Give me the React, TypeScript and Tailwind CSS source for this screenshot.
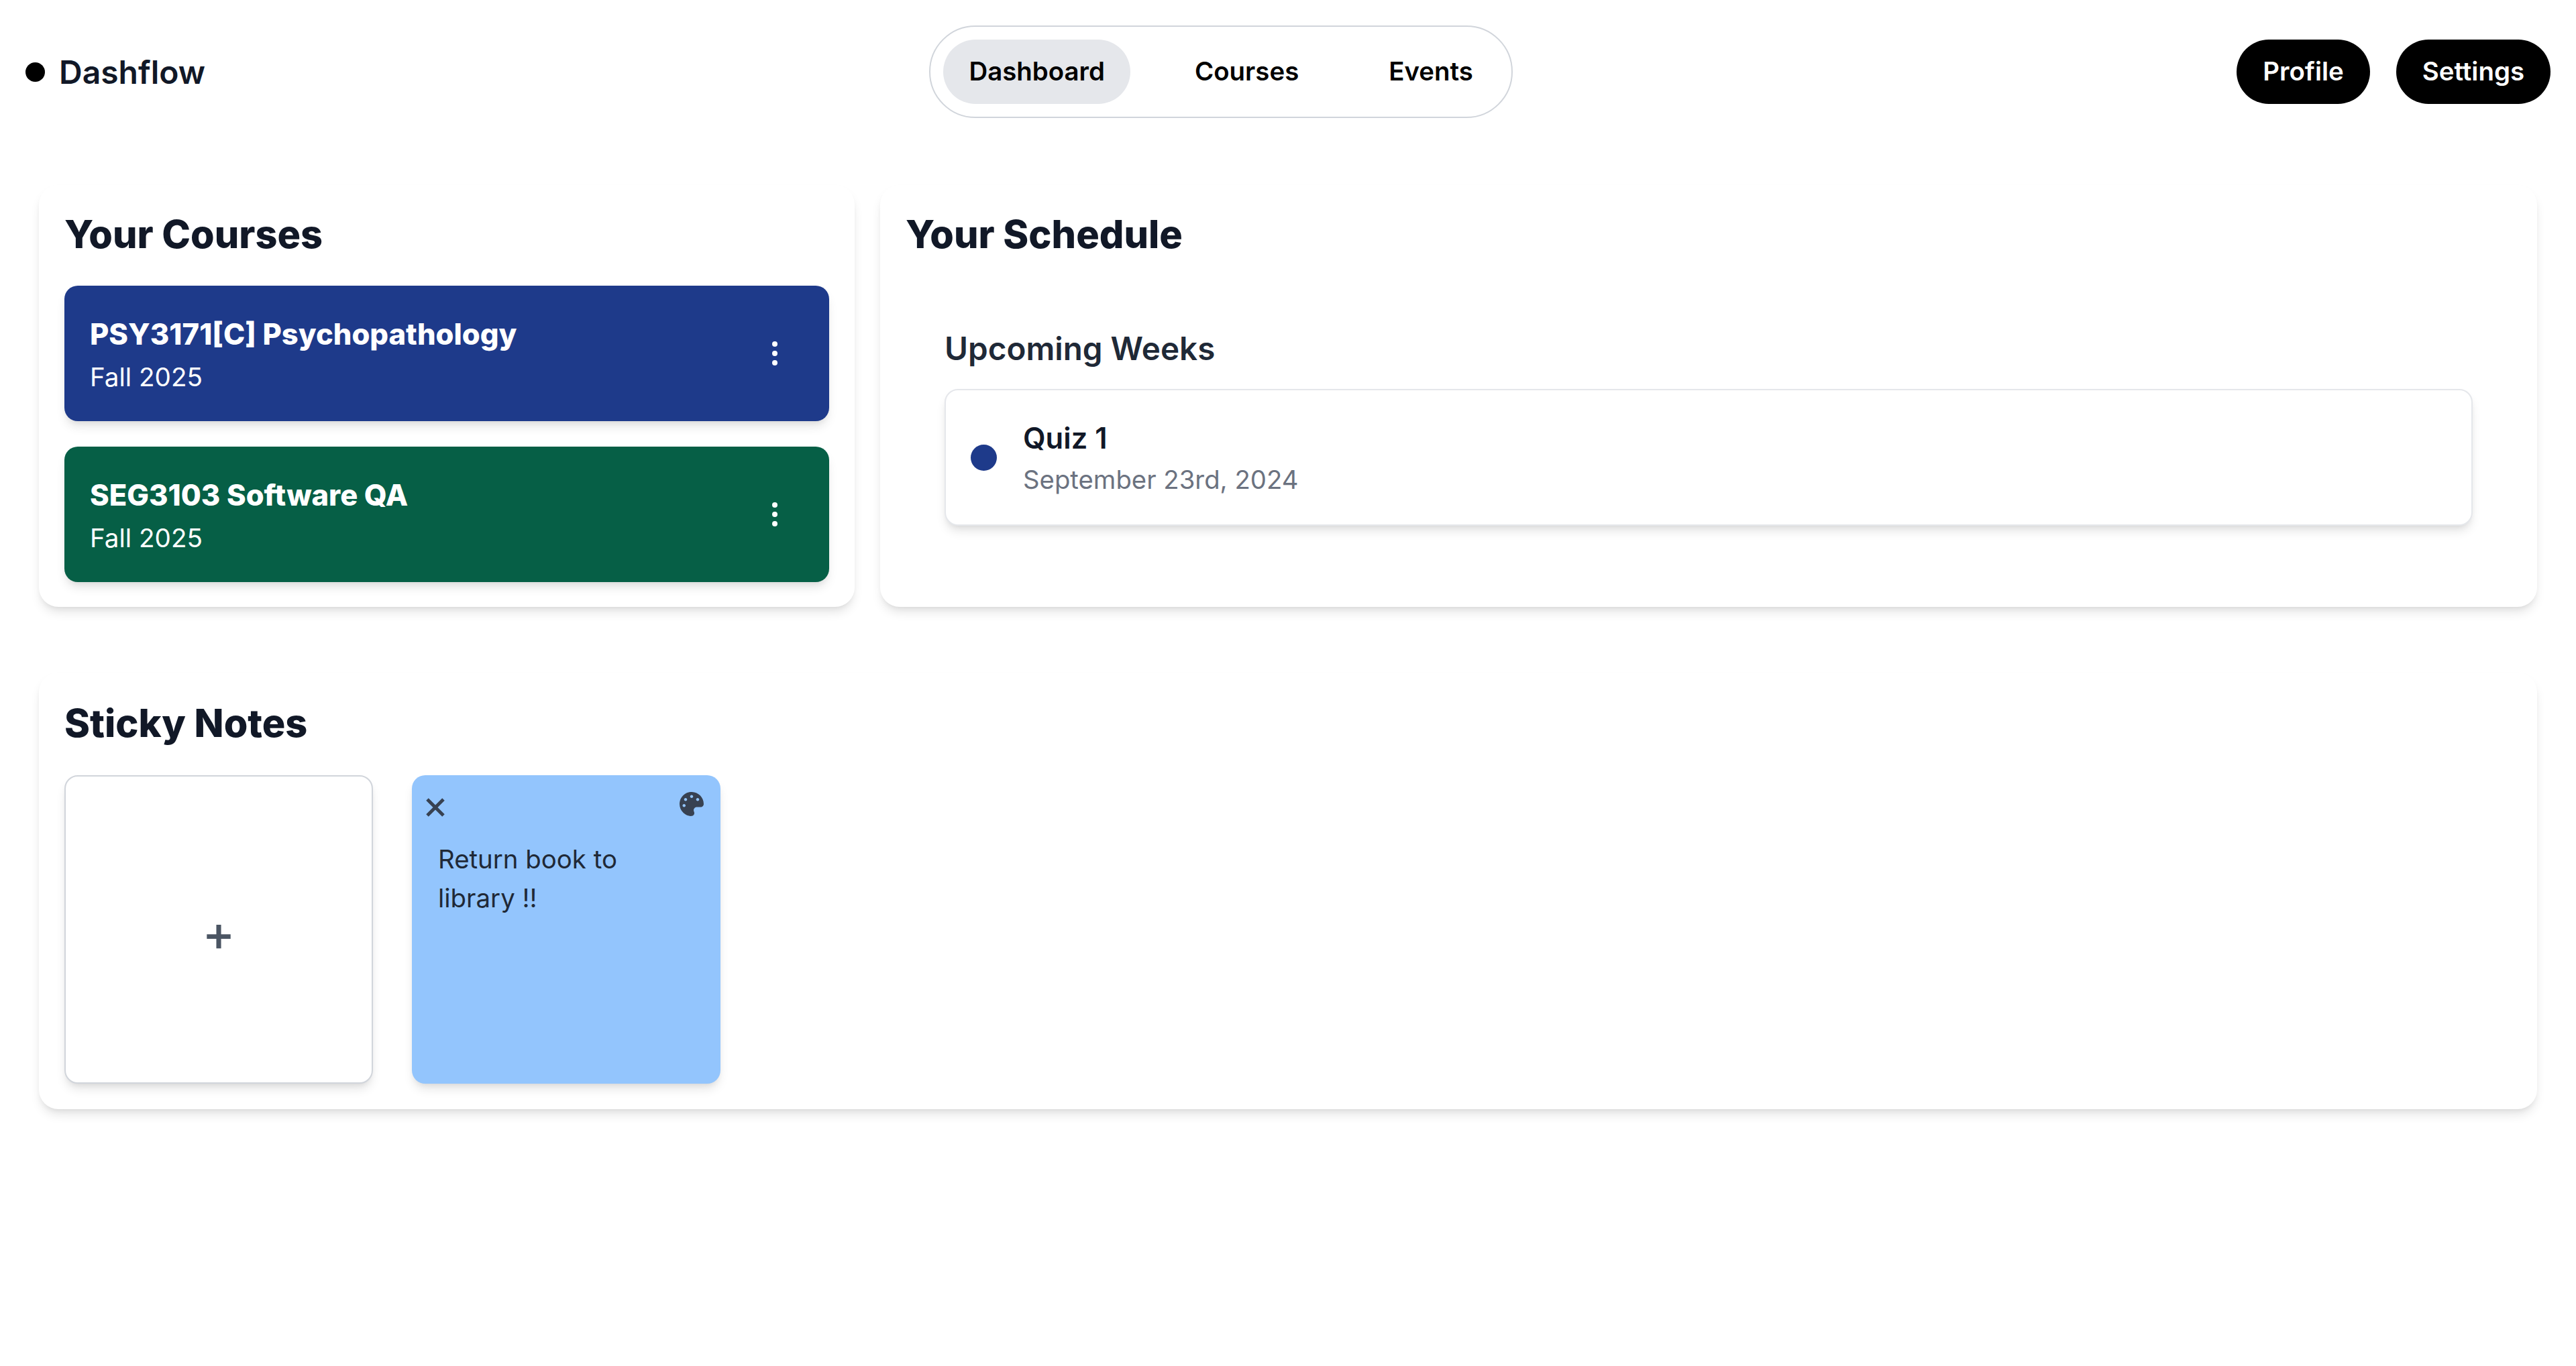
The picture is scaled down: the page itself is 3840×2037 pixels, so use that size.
import { FaPalette } from 'react-icons/fa';

const cardShadow = 'shadow-[0_10px_15px_-2px_rgba(0,0,0,0.1),0_5px_10px_-5px_rgba(0,0,0,0.1)]';

const courses = [
  { id: 'psy', title: 'PSY3171[C] Psychopathology', term: 'Fall 2025', color: 'bg-[#1e3a8a]' },
  { id: 'seg', title: 'SEG3103 Software QA', term: 'Fall 2025', color: 'bg-[#065f46]' }
];

function Header() {
  return (
    <header className="flex items-center justify-between px-[38px] py-[38px]">
      <div className="flex items-center gap-[21px] text-[48px] leading-[59px] font-semibold text-[#111827]">
        <span className="w-[29px] h-[29px] rounded-full bg-black" />
        Dashflow
      </div>
      <nav className="flex items-center gap-[58px] p-[19px] border-[2px] border-[#d1d5db] rounded-[69px] text-[38.4px] font-semibold text-black">
        <a className="h-[96px] flex items-center px-[38px] rounded-[48px] bg-[#e5e7eb]">Dashboard</a>
        <a className="h-[96px] flex items-center px-[38px] rounded-[48px]">Courses</a>
        <a className="h-[96px] flex items-center px-[38px] rounded-[48px]">Events</a>
      </nav>
      <div className="flex items-center gap-[39px] text-[38.4px] font-semibold text-white">
        <button className="h-[96px] px-[39px] rounded-[48px] bg-black">Profile</button>
        <button className="h-[96px] px-[39px] rounded-[48px] bg-black">Settings</button>
      </div>
    </header>
  );
}

function CourseCard({ title, term, color }: { title: string; term: string; color: string }) {
  return (
    <div className={`flex items-center justify-between h-[202px] px-[38px] rounded-[20px] text-white ${color} ${cardShadow}`}>
      <div>
        <div className="text-[43.5px] leading-[69px] font-extrabold">{title}</div>
        <div className="text-[38.6px] leading-[58px]">{term}</div>
      </div>
      <svg width="10" height="38" viewBox="0 0 10 38" fill="white" className="mr-[38px]">
        <circle cx="5" cy="5" r="4" />
        <circle cx="5" cy="19" r="4" />
        <circle cx="5" cy="33" r="4" />
      </svg>
    </div>
  );
}

export default function App() {
  return (
    <div className="min-h-screen bg-white font-['Inter',sans-serif]">
      <Header />
      <main className="flex flex-col gap-[98px] px-[58px] pt-[62px]">
        <div className="flex gap-[38px]">
          <section className={`w-[1216px] h-[629px] p-[38px] rounded-[29px] bg-white ${cardShadow}`}>
            <h2 className="text-[57.6px] leading-[71px] font-extrabold text-[#111827] mb-[41px]">Your Courses</h2>
            <div className="flex flex-col gap-[38px]">
              {courses.map((course) => (
                <CourseCard key={course.id} {...course} />
              ))}
            </div>
          </section>
          <section className={`flex-1 h-[629px] p-[38px] rounded-[29px] bg-white ${cardShadow}`}>
            <h2 className="text-[57.6px] leading-[71px] font-extrabold text-[#111827]">Your Schedule</h2>
            <div className="px-[58px] pt-[100px]">
              <h3 className="text-[47.6px] leading-[69px] font-semibold text-[#1f2937] mb-[26px]">Upcoming Weeks</h3>
              <div className={`flex items-center gap-[39px] h-[204px] px-[37px] border-[2px] border-[#e5e7eb] rounded-[20px] bg-white ${cardShadow}`}>
                <span className="w-[39px] h-[39px] rounded-full bg-[#1e3a8a]" />
                <div>
                  <div className="text-[43.5px] leading-[66px] font-semibold text-[#111827]">Quiz 1</div>
                  <div className="text-[38.3px] leading-[58px] text-[#6b7280]">September 23rd, 2024</div>
                </div>
              </div>
            </div>
          </section>
        </div>
        <section className={`pt-[40px] px-[38px] pb-[38px] rounded-[29px] bg-white ${cardShadow}`}>
          <h2 className="text-[57.6px] leading-[71px] font-extrabold text-[#111827] mb-[42px]">Sticky Notes</h2>
          <div className="flex gap-[58px]">
            <div className={`flex items-center justify-center w-[460px] h-[460px] pt-[12px] border-[2px] border-[#d1d5db] rounded-[20px] bg-white text-[73.5px] leading-none font-medium text-[#4b5563] ${cardShadow}`}>
              +
            </div>
            <div className={`relative w-[460px] h-[460px] pt-[96px] px-[39px] rounded-[20px] bg-[#93c5fd] text-[38.4px] leading-[58px] text-[#1f2937] ${cardShadow}`}>
              <svg width="28" height="28" viewBox="0 0 28 28" stroke="#374151" strokeWidth="5" className="absolute left-[21px] top-[34px]">
                <path d="M2 2l24 24M26 2L2 26" />
              </svg>
              <FaPalette className="absolute right-[25px] top-[25px] w-[36px] h-[36px] text-[#374151]" />
              Return book to library !!
            </div>
          </div>
        </section>
      </main>
    </div>
  );
}
